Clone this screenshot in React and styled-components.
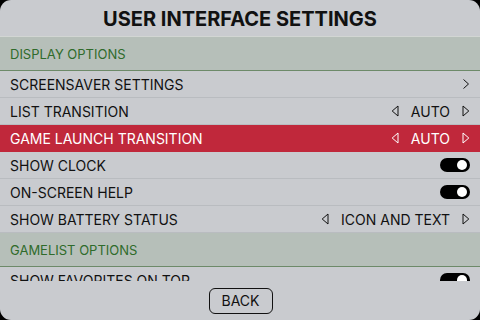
import React from "react";
import styled, { createGlobalStyle } from "styled-components";

const Global = createGlobalStyle`
  html, body { margin: 0; padding: 0; background: #000; }
  body { font-family: Inter, "Noto Sans", sans-serif; }
  * { box-sizing: border-box; }
`;

const Screen = styled.div`
  width: 480px;
  height: 320px;
  background: #000;
  overflow: hidden;
`;

const Panel = styled.div`
  width: 480px;
  height: 320px;
  background: #c9cbcf;
  border-radius: 11px;
  display: flex;
  flex-direction: column;
  overflow: hidden;
`;

const Title = styled.div`
  height: 37px;
  flex: none;
  display: flex;
  align-items: center;
  justify-content: center;
  font-weight: 700;
  font-size: 20px;
  color: #111;
  padding-top: 1px;
  border-bottom: 1px solid #d2d6d3;
`;

const List = styled.div`
  flex: 1;
  overflow: hidden;
  display: flex;
  flex-direction: column;
`;

const Header = styled.div`
  height: 34px;
  flex: none;
  background: #b6bfb9;
  border-bottom: 1px solid #6d8a69;
  color: #2f6b2b;
  font-size: 13px;
  display: flex;
  align-items: center;
  padding-left: 10px;
  padding-top: 1px;
`;

const Row = styled.div`
  height: 27px;
  flex: none;
  display: flex;
  align-items: center;
  justify-content: space-between;
  padding: 0 10px 0 10px;
  font-size: 14px;
  color: ${(p) => (p.$active ? "#fff" : "#111")};
  background: ${(p) => (p.$active ? "#c0283b" : "transparent")};
  border-bottom: 1px solid ${(p) => (p.$active ? "#c0283b" : "#b9bcc0")};
`;

const Value = styled.div`
  display: flex;
  align-items: center;
  gap: 12px;
`;

const Toggle = styled.div`
  width: 30px;
  height: 14px;
  margin-right: 0px;
  border-radius: 7px;
  background: #000;
  position: relative;
  &::after {
    content: "";
    position: absolute;
    right: 3px;
    top: 2px;
    width: 10px;
    height: 10px;
    border-radius: 50%;
    background: #fff;
  }
`;

const Footer = styled.div`
  height: 39px;
  flex: none;
  display: flex;
  align-items: center;
  justify-content: center;
`;

const Button = styled.div`
  width: 64px;
  height: 26px;
  border: 1px solid #111;
  border-radius: 6px;
  display: flex;
  align-items: center;
  justify-content: center;
  font-size: 14px;
  color: #111;
  margin-left: 1px;
`;

const Tri = ({ dir }) => (
  <svg width="8" height="12" viewBox="0 0 8 12" style={{ display: "block" }}>
    {dir === "left" ? (
      <polygon points="7,1 1.2,6 7,11" fill="none" stroke="currentColor" strokeWidth="1" strokeLinejoin="miter" />
    ) : (
      <polygon points="1,1 6.8,6 1,11" fill="none" stroke="currentColor" strokeWidth="1" strokeLinejoin="miter" />
    )}
  </svg>
);

const Chevron = () => (
  <svg width="8" height="12" viewBox="0 0 8 12" style={{ display: "block" }}>
    <polyline points="1.5,1.5 6.5,6 1.5,10.5" fill="none" stroke="currentColor" strokeWidth="1" />
  </svg>
);

const Selector = ({ value }) => (
  <Value>
    <Tri dir="left" />
    <span>{value}</span>
    <Tri dir="right" />
  </Value>
);

export default function App() {
  return (
    <>
      <Global />
      <Screen>
        <Panel>
          <Title>USER INTERFACE SETTINGS</Title>
          <List>
            <Header>DISPLAY OPTIONS</Header>
            <Row>
              <span>SCREENSAVER SETTINGS</span>
              <Chevron />
            </Row>
            <Row>
              <span>LIST TRANSITION</span>
              <Selector value="AUTO" />
            </Row>
            <Row $active>
              <span>GAME LAUNCH TRANSITION</span>
              <Selector value="AUTO" />
            </Row>
            <Row>
              <span>SHOW CLOCK</span>
              <Toggle />
            </Row>
            <Row>
              <span>ON-SCREEN HELP</span>
              <Toggle />
            </Row>
            <Row>
              <span>SHOW BATTERY STATUS</span>
              <Selector value="ICON AND TEXT" />
            </Row>
            <Header>GAMELIST OPTIONS</Header>
            <Row>
              <span>SHOW FAVORITES ON TOP</span>
              <Toggle />
            </Row>
          </List>
          <Footer>
            <Button>BACK</Button>
          </Footer>
        </Panel>
      </Screen>
    </>
  );
}
